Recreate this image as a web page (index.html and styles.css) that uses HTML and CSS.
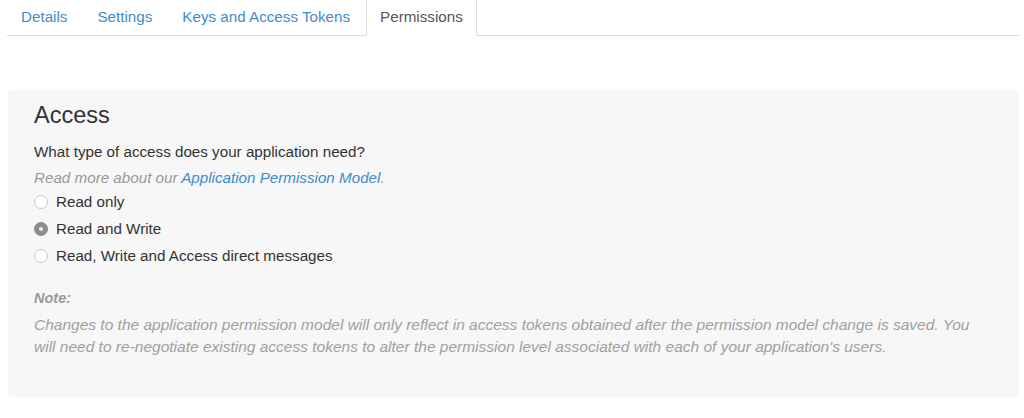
FILE: index.html
```html
<!DOCTYPE html>
<html>
<head>
<meta charset="utf-8">
<link rel="stylesheet" href="styles.css">
</head>
<body>
<div class="page">
  <ul class="tabs">
    <li class="tab"><a href="#">Details</a></li>
    <li class="tab"><a href="#">Settings</a></li>
    <li class="tab"><a href="#">Keys and Access Tokens</a></li>
    <li class="tab active"><a href="#">Permissions</a></li>
  </ul>
  <div class="well">
    <h2 class="title">Access</h2>
    <p class="question">What type of access does your application need?</p>
    <p class="hint">Read more about our <a href="#">Application Permission Model</a>.</p>
    <div class="options">
      <label class="option"><span class="radio"></span>Read only</label>
      <label class="option"><span class="radio checked"></span>Read and Write</label>
      <label class="option"><span class="radio"></span>Read, Write and Access direct messages</label>
    </div>
    <p class="note-label">Note:</p>
    <p class="note">Changes to the application permission model will only reflect in access tokens obtained after the permission model change is saved. You will need to re-negotiate existing access tokens to alter the permission level associated with each of your application's users.</p>
  </div>
</div>
</body>
</html>
```
FILE: styles.css
```css
* { box-sizing: border-box; }
html, body {
  margin: 0;
  padding: 0;
  background: #fff;
}
body {
  font-family: "Liberation Sans", Arial, Helvetica, sans-serif;
  font-size: 15.2px;
  line-height: 20px;
  color: #333;
}
.page {
  padding: 0 5px 0 7px;
}
.tabs {
  display: flex;
  list-style: none;
  margin: 0;
  padding: 0;
  height: 36px;
  border-bottom: 1px solid #ddd;
}
.tab {
  margin-right: 2px;
}
.tab a {
  display: block;
  height: 36px;
  padding: 7px 13px 8px;
  border: 1px solid transparent;
  border-top: 0;
  color: #428bca;
  text-decoration: none;
  font-size: 15.2px;
}
.tab.active a {
  color: #555;
  background: #fff;
  border-color: #ddd;
  border-bottom-color: #fff;
}
.well {
  margin: 54px 0 0 1px;
  background: #f7f7f7;
  border-radius: 4px;
  padding: 12px 26px 39px 26px;
  min-height: 307px;
}
.title {
  margin: 0;
  font-size: 23.5px;
  font-weight: normal;
  line-height: 26px;
  color: #333;
}
.question {
  margin: 14px 0 6px;
}
.hint {
  margin: 0;
  font-style: italic;
  color: #999;
}
.hint a {
  color: #428bca;
  text-decoration: none;
}
.options {
  display: flex;
  flex-direction: column;
}
.option {
  display: flex;
  align-items: center;
  height: 27px;
}
.radio {
  width: 14px;
  height: 14px;
  border-radius: 50%;
  border: 1px solid #c8c8c8;
  background: #fff;
  margin-right: 8px;
  display: flex;
  align-items: center;
  justify-content: center;
}
.radio.checked {
  background: #8c8c8c;
  border-color: #8c8c8c;
}
.radio.checked::after {
  content: "";
  width: 4px;
  height: 4px;
  border-radius: 50%;
  background: #eee;
}
.note-label {
  margin: 19px 0 6px;
  font-style: italic;
  font-weight: bold;
  color: #999;
  font-size: 14.5px;
}
.note {
  margin: 0;
  font-style: italic;
  color: #a0a0a0;
  line-height: 22px;
  font-size: 15.5px;
  padding-right: 20px;
}
```
